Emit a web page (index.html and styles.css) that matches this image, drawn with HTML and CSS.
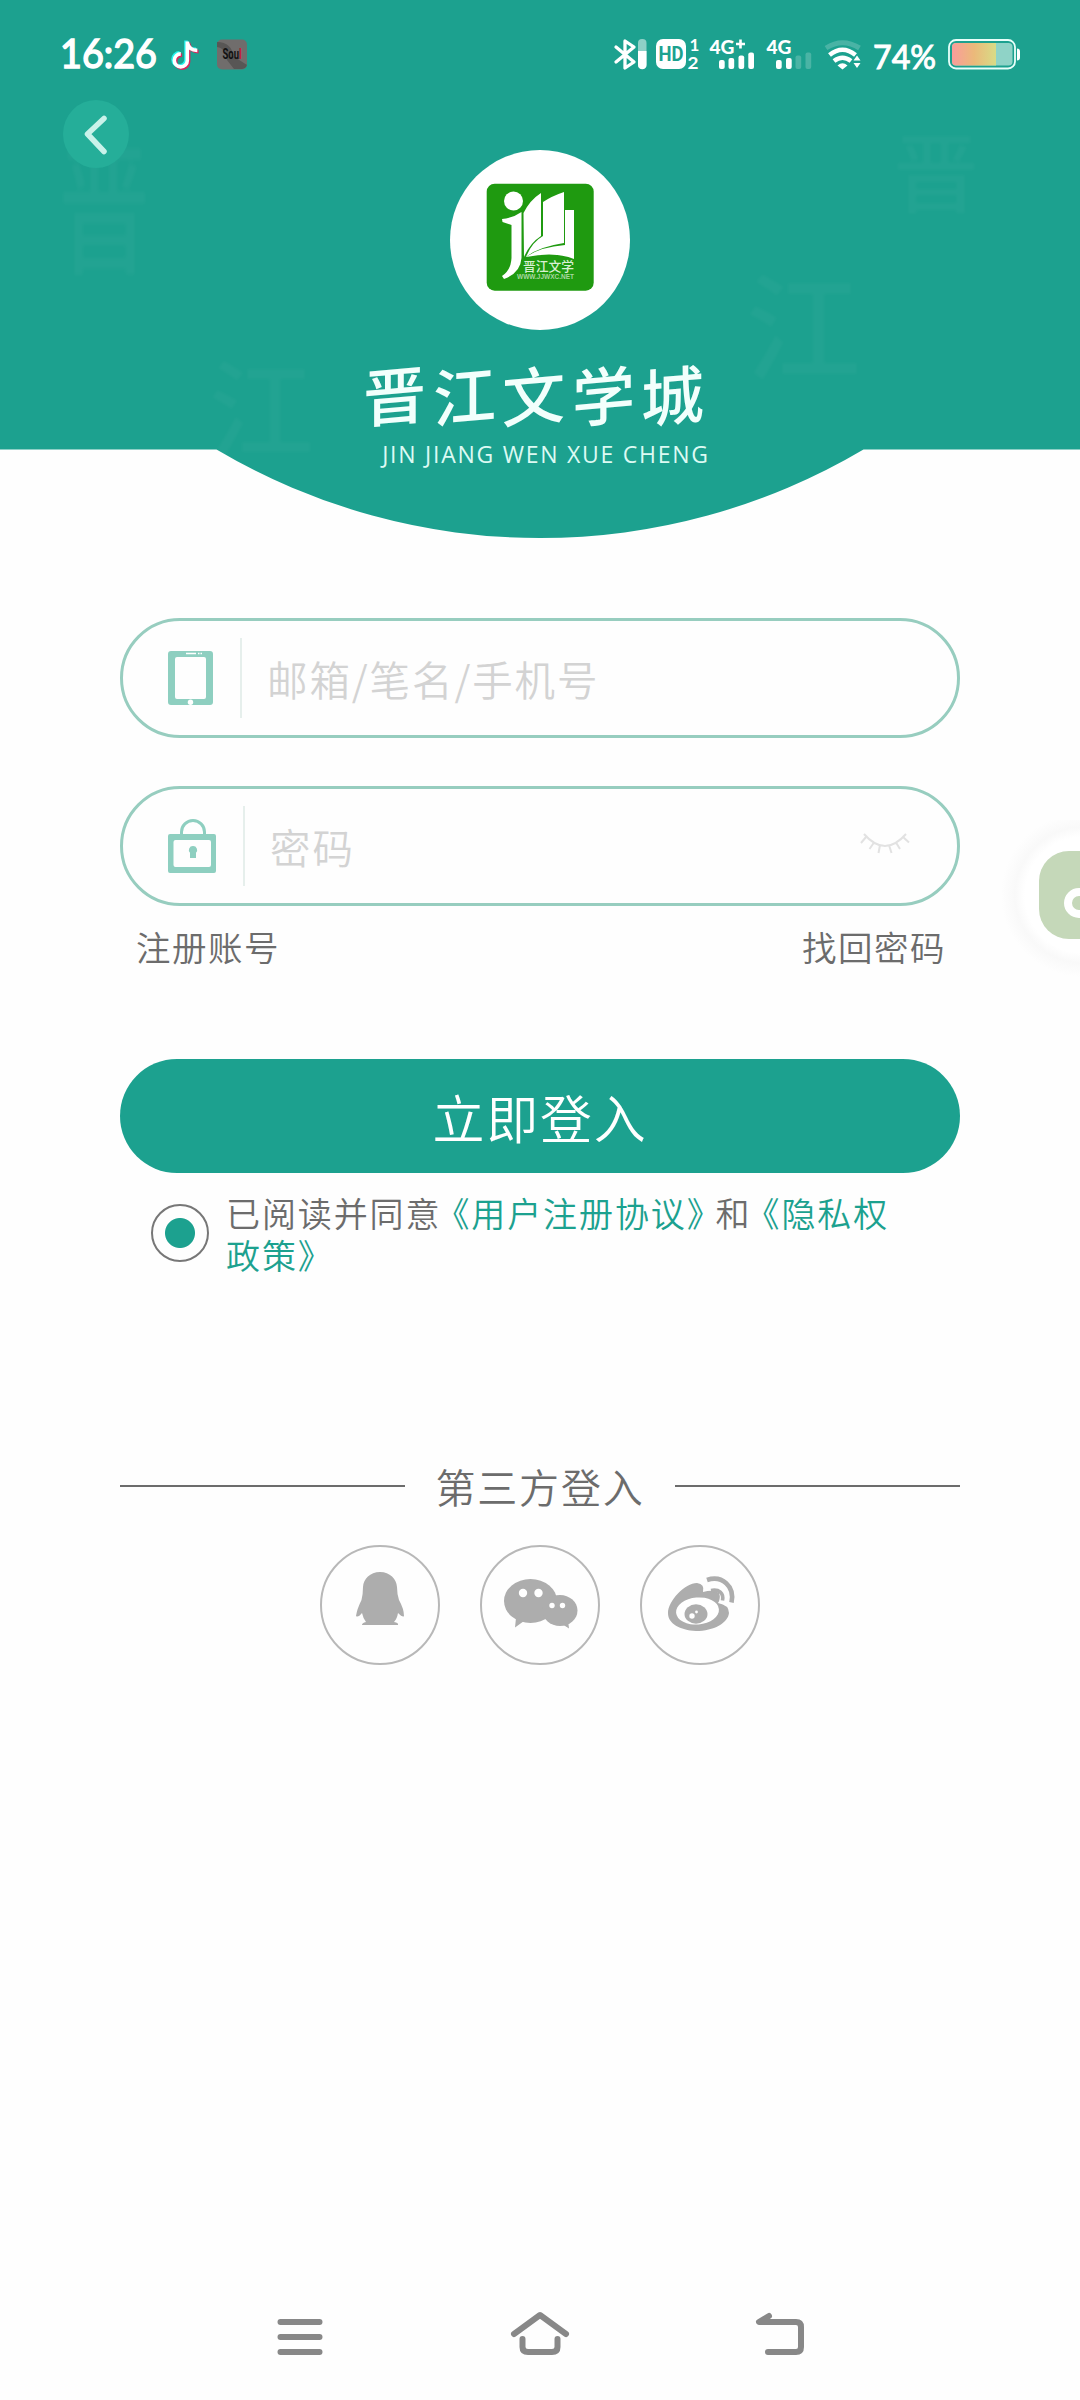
FILE: index.html
```html
<!DOCTYPE html>
<html lang="zh-CN">
<head>
<meta charset="utf-8">
<title>晋江文学城 登入</title>
<link rel="stylesheet" href="styles.css">
</head>
<body>
<div class="screen">
  <header class="hero">
    <svg class="hero-curve" width="1080" height="539" viewBox="0 0 1080 539"><path d="M0 0H1080V449.500H863.500A635 635 0 0 1 216.500 449.500H0Z" fill="#1ca18f"/></svg>
    <span class="ghost ghost-a">晋</span>
    <span class="ghost ghost-b">晋</span>
    <span class="ghost ghost-c">江</span>
    <span class="ghost ghost-d">江</span>

    <div class="status">
      <svg width="200" height="50" viewBox="0 0 200 50">
        <text x="0" y="38" class="clock" textLength="97" lengthAdjust="spacingAndGlyphs">16:26</text>
        <g fill="none" stroke-width="3.600">
          <path d="M127 11V30a6.500 6.500 0 1 1-6.500-6.500M127 12c1 5 4 8 10 8" stroke="#25f4ee" transform="translate(-1 -.6)"/>
          <path d="M127 11V30a6.500 6.500 0 1 1-6.500-6.500M127 12c1 5 4 8 10 8" stroke="#d8265c" transform="translate(1.600 1.600)"/>
          <path d="M127 11V30a6.500 6.500 0 1 1-6.500-6.500M127 12c1 5 4 8 10 8" stroke="#fff" transform="translate(.3 .4)"/>
        </g>
        <rect x="157" y="9.500" width="30" height="30" rx="5" fill="#706d6c"/>
        <path d="M157 12c10 0 16 6 16 14l14 9v-1a5 5 0 0 1-5 5h-8l-7-9c-1-8-4-12-10-13z" fill="#585655"/>
        <text x="162.500" y="29" class="soul" textLength="19" lengthAdjust="spacingAndGlyphs">Sou<tspan fill="#c8102e">l</tspan></text>
      </svg>
      <svg width="422" height="50" viewBox="0 0 422 50">
        <path d="M16 17L34 32L25 38V11L34 17L16 32" fill="none" stroke="#fff" stroke-width="3.300" stroke-linejoin="round" stroke-linecap="round"/>
        <rect x="38" y="9" width="8.500" height="30" rx="4" fill="#fff" opacity=".5"/>
        <path d="M38 21h8.500v14a4 4 0 0 1-8.500 0z" fill="#fff"/>
        <rect x="56" y="9" width="30" height="30" rx="7" fill="#fff"/>
        <text x="58.500" y="31" class="hd" textLength="25" lengthAdjust="spacingAndGlyphs">HD</text>
        <text x="89.500" y="21" class="sim">1</text>
        <text x="87.500" y="39" class="sim" textLength="11" lengthAdjust="spacingAndGlyphs">2</text>
        <text x="109.500" y="23.500" class="net" textLength="25" lengthAdjust="spacingAndGlyphs">4G</text>
        <path d="M136 14H145M140.500 9.500V18.500" stroke="#fff" stroke-width="2.600"/>
        <g fill="#fff">
          <rect x="119" y="30" width="5.700" height="9" rx="2"/><rect x="128.500" y="28" width="5.700" height="11" rx="2"/><rect x="138.500" y="25.500" width="5.700" height="13.500" rx="2"/><rect x="148.300" y="22.500" width="5.700" height="16.500" rx="2"/>
          <rect x="176" y="30" width="5.700" height="9" rx="2"/><rect x="186" y="28" width="5.700" height="11" rx="2"/>
          <g opacity=".2"><rect x="195.500" y="25.500" width="5.700" height="13.500" rx="2"/><rect x="205.500" y="22.500" width="5.700" height="16.500" rx="2"/></g>
        </g>
        <text x="166.500" y="23.500" class="net" textLength="25" lengthAdjust="spacingAndGlyphs">4G</text>
        <g fill="none" stroke="#fff" stroke-width="4.500">
          <path d="M226 18Q242.500 7.500 259.500 18" opacity=".2" stroke-width="5"/>
          <path d="M229.500 25Q242.500 14.500 255.500 25"/>
          <path d="M234 31Q242.500 24.500 251 31"/>
        </g>
        <path d="M237.500 35.500q5-4.500 10 0l-5 4z M253.500 30.500l3.500-5 3.500 5z M253.500 33l3.500 5 3.500-5z" fill="#fff"/>
        <text x="273" y="38.500" class="pct" textLength="63" lengthAdjust="spacingAndGlyphs">74%</text>
        <defs><linearGradient id="charge"><stop offset="0" stop-color="#f99d9b"/><stop offset=".5" stop-color="#ebb97a"/><stop offset="1" stop-color="#d8dc86"/></linearGradient></defs>
        <rect x="349" y="10" width="66" height="28.500" rx="7" fill="none" stroke="#e8fffa" stroke-width="1.800"/>
        <rect x="352" y="13" width="60.500" height="22.500" rx="4" fill="#8fd3c7"/>
        <path d="M356 13h40v22.500h-40a4 4 0 0 1-4-4v-14.500a4 4 0 0 1 4-4z" fill="url(#charge)"/>
        <path d="M417 18.500q3 0 3 3v6q0 3-3 3z" fill="#fff"/>
      </svg>
    </div>

    <div class="back-row">
      <svg width="66" height="68" viewBox="0 0 66 68"><ellipse cx="33" cy="34" rx="33" ry="34" fill="#25ae99"/><path d="M41 18.500L24.500 34L41 51.500" fill="none" stroke="#c9f2ea" stroke-width="5.500" stroke-linecap="round" stroke-linejoin="round"/></svg>
    </div>

    <div class="brand">
      <svg class="brand-logo" width="180" height="180" viewBox="0 0 180 180">
        <circle cx="90" cy="90" r="90" fill="#fff"/>
        <rect x="36.700" y="33.700" width="107" height="107" rx="8" fill="#1f9a10"/>
        <circle cx="63.500" cy="51" r="9.500" fill="#fff"/>
        <path d="M52 69q11-1 19.500-7v46q-1 15-17.500 21l-2-3q9-6 9.500-18V75l-9-3z" fill="#fff"/>
        <path d="M73.500 63Q80 50 91 43V86Q80 93 74 107Z" fill="#fff"/>
        <path d="M93 52Q102 46 114 42V93Q88 97 76 107Q82 92 93 86Z" fill="#fff"/>
        <path d="M115 60h9v49Q105 101 76 107Q90 97 115 95Z" fill="#fff"/>
        <text x="73" y="121" class="logo-cn" textLength="51" lengthAdjust="spacingAndGlyphs">晋江文学</text>
        <text x="67" y="129" class="logo-url" textLength="57" lengthAdjust="spacingAndGlyphs">WWW.JJWXC.NET</text>
      </svg>
      <h1 class="brand-name"><span>晋</span><span>江</span><span>文</span><span>学</span><span>城</span></h1>
      <p class="brand-pinyin">JIN JIANG WEN XUE CHENG</p>
    </div>
  </header>

  <main class="login">
    <div class="field">
      <svg width="45" height="54" viewBox="0 0 45 54"><path fill-rule="evenodd" d="M3 0H42a3 3 0 0 1 3 3V51a3 3 0 0 1-3 3H3a3 3 0 0 1-3-3V3a3 3 0 0 1 3-3ZM9 6a2 2 0 0 0-2 2V46a2 2 0 0 0 2 2H36a2 2 0 0 0 2-2V8a2 2 0 0 0-2-2Z" fill="#8ecfc0"/><path d="M18 2.500H28M30 2.500H31.500M32.500 2.500H34" stroke="#fff" stroke-width="1.600"/><circle cx="22.500" cy="51.300" r="2.700" fill="#fff"/></svg>
      <span class="field-rule"></span>
      <span class="placeholder">邮箱/笔名/手机号</span>
    </div>
    <div class="field">
      <svg width="48" height="54" viewBox="0 0 48 54"><path d="M13.500 17V13a11.500 11.500 0 0 1 23 0V17" fill="none" stroke="#8ecfc0" stroke-width="3"/><path fill-rule="evenodd" d="M2 15H46a2 2 0 0 1 2 2V52a2 2 0 0 1-2 2H2a2 2 0 0 1-2-2V17a2 2 0 0 1 2-2ZM7.500 21a2 2 0 0 0-2 2V46a2 2 0 0 0 2 2H41a2 2 0 0 0 2-2V23a2 2 0 0 0-2-2Z" fill="#8ecfc0"/><path d="M25 27a4 4 0 0 1 3 6.800V39h-6V33.800A4 4 0 0 1 25 27Z" fill="#8ecfc0"/></svg>
      <span class="field-rule"></span>
      <span class="placeholder">密码</span>
      <svg class="eye" width="50" height="22" viewBox="0 0 50 22"><path d="M4 1Q25 25 46 1M6 4L1 10M14 9.500L9.500 16M20 12L18.500 20M29 12L31.500 20M36 9.500L40 16M43 4L49 9.500" fill="none" stroke="#e2e2e2" stroke-width="2"/></svg>
    </div>
    <div class="links"><a>注册账号</a><a>找回密码</a></div>

    <div class="submit">立即登入</div>

    <div class="agree">
      <span class="radio"></span>
      <p>已阅读并同意<a>《用户注册协议》</a>和<a>《隐私权<br>政策》</a></p>
    </div>

    <div class="third-title"><i></i><span>第三方登入</span><i></i></div>
    <div class="third-list">
      <span class="third"><svg width="120" height="120" viewBox="0 0 120 120"><path d="M60 27C70 27 76.500 34 77 42Q77 49 79 55Q84 64 84 71Q83 73 78 68Q77 74 74 77Q79 78 78 80H42Q42 78 46 77Q43 73 42 68Q38 73 36 71Q37 64 41.500 55Q43 49 43 42C43.500 34 50 27 60 27Z" fill="#adadad"/></svg></span>
      <span class="third"><svg width="120" height="120" viewBox="0 0 120 120"><g fill="#adadad"><ellipse cx="50.500" cy="56" rx="26.500" ry="22"/><ellipse cx="80" cy="65.500" rx="17.500" ry="15.500"/><path d="M36 73L35 82.500L44 76ZM82 79L89 83.500L88 75Z"/></g><g fill="#fff"><circle cx="43" cy="48" r="4.200"/><circle cx="58.500" cy="48" r="4.200"/><circle cx="72" cy="60.500" r="2.700"/><circle cx="82.500" cy="60.500" r="2.700"/></g></svg></span>
      <span class="third"><svg width="120" height="120" viewBox="0 0 120 120"><path d="M28 68C28 56 45 38 57 38Q65 39 63 47Q74 44 79 48Q81 53 78 58Q89 60 89 68C88 78 74 86 56 86C40 85 28 79 28 68Z" fill="#adadad"/><ellipse cx="57.500" cy="66" rx="21.500" ry="13.500" fill="#fff" transform="rotate(-5 57.500 66)"/><ellipse cx="56" cy="69" rx="11.500" ry="9.700" fill="#adadad"/><circle cx="52" cy="71" r="2.700" fill="#fff"/><circle cx="56.500" cy="67" r="1.400" fill="#fff"/><path d="M67 35C82 30 95 41 91.500 57.500" fill="none" stroke="#adadad" stroke-width="4.600"/><path d="M71 43.500C80 42 86 47 84 55.500" fill="none" stroke="#fff" stroke-width="5"/><path d="M71 45.500C79 44 84 48 82.500 55.500" fill="none" stroke="#adadad" stroke-width="3.600"/></svg></span>
    </div>
  </main>

  <nav class="sysnav">
    <svg width="60" height="50" viewBox="0 0 60 50"><path d="M10.500 13H49.500M10.500 28H49.500M10.500 43H49.500"/></svg>
    <svg width="60" height="50" viewBox="0 0 60 50"><path d="M4 25L30 6L56 25M12.500 30V38Q12.500 43 18 43H42Q47.500 43 47.500 38V30" /></svg>
    <svg width="60" height="50" viewBox="0 0 60 50"><path d="M19 7L9 13H46Q51 13 51 18V38Q51 43 46 43H18"/></svg>
  </nav>

  <div class="floater"><svg width="80" height="160" viewBox="0 0 80 160"><rect x="39" y="31" width="88" height="88" rx="30" fill="#c5d8b9"/><circle cx="79" cy="83" r="11" fill="none" stroke="#fff" stroke-width="8"/></svg></div>
</div>
</body>
</html>
```
FILE: styles.css
```css
* { box-sizing: border-box; }

body {
  margin: 0;
  background: #fefefe;
  font-family: "Noto Sans CJK SC", sans-serif;
  font-weight: 350;
  color: #6c6c6c;
}

h1, p { margin: 0; font-weight: inherit; }

.screen {
  position: relative;
  display: flex;
  flex-direction: column;
  width: 1080px;
  height: 2400px;
  overflow: hidden;
}

/* header */
.hero { position: relative; height: 538px; }
.hero-curve { position: absolute; left: 0; top: 0; }

.ghost {
  position: absolute;
  color: rgba(255, 255, 255, .028);
  font-weight: 500;
  line-height: 1;
  filter: blur(1.500px);
}
.ghost-a { left: 58px; top: 130px; font-size: 92px; transform: scaleY(1.55); transform-origin: top; }
.ghost-b { left: 893px; top: 126px; font-size: 86px; }
.ghost-c { left: 745px; top: 262px; font-size: 116px; }
.ghost-d { left: 208px; top: 350px; font-size: 106px; }

.status {
  position: relative;
  display: flex;
  justify-content: space-between;
  height: 80px;
  padding: 30px 58px 0 60px;
}
.clock { font: 400 40px Lato, sans-serif; fill: #fff; stroke: #fff; stroke-width: 1.500px; }
.soul { font: 700 14px Roboto, sans-serif; fill: #111; }
.hd { font: 700 20px Roboto, sans-serif; fill: #1ca18f; }
.sim { font: 700 17px Lato, sans-serif; fill: #fff; }
.net { font: 900 19px Lato, sans-serif; fill: #fff; }
.pct { font: 400 33px Lato, sans-serif; fill: #fff; stroke: #fff; stroke-width: 1px; }

.back-row { position: relative; height: 70px; padding: 20px 0 0 63px; }

.brand { position: relative; display: flex; flex-direction: column; align-items: center; }
.brand-logo { display: block; }
.logo-cn { font: 500 13px "Noto Sans CJK SC", sans-serif; fill: #d9f0d3; }
.logo-url { font: 700 7px "Liberation Sans", sans-serif; fill: #a9d8a0; }

.brand-name {
  display: flex;
  gap: 6.500px;
  margin: 29px 0 0 -13px;
  font-size: 63px;
  line-height: 68px;
  font-weight: 500;
  color: #f2fffc;
}
.brand-name span { transform: skewY(-5deg); }

.brand-pinyin {
  margin: 9px 0 0 12px;
  font: 400 23px/36px "Open Sans", sans-serif;
  letter-spacing: 1.750px;
  color: #dcfaf3;
  white-space: nowrap;
}

/* form */
.login { display: flex; flex-direction: column; padding: 80px 120px 0; }

.field {
  display: flex;
  align-items: center;
  height: 120px;
  margin-bottom: 48px;
  padding: 0 47px 0 45px;
  border: 3px solid #97cdbf;
  border-radius: 60px;
}
.field-rule { width: 2px; height: 80px; margin: 0 25px 0 27px; background: #e6efec; }
.placeholder { flex: 1; font-size: 40.500px; letter-spacing: 1.900px; color: #d3d3d3; }
.eye { margin-top: -4px; }

.links {
  display: flex;
  justify-content: space-between;
  margin-top: -34px;
  padding: 0 14px 0 16px;
  font-size: 34.500px;
  line-height: 52px;
  letter-spacing: 1.500px;
}

.submit {
  height: 114px;
  margin-top: 87px;
  border-radius: 57px;
  background: #1ca18f;
  color: #fff;
  font-size: 52px;
  line-height: 116px;
  letter-spacing: 1.800px;
  text-align: center;
}

.agree {
  display: flex;
  gap: 17px;
  margin-top: 19px;
  padding-left: 31px;
  font-size: 34px;
  line-height: 42px;
  letter-spacing: 1.900px;
  white-space: nowrap;
}
.agree a { margin: 0 -7px 0 -6px; color: #1ca18f; }
.radio {
  width: 58px;
  height: 58px;
  margin-top: 12px;
  border: 2px solid #777;
  border-radius: 50%;
  background: radial-gradient(circle, #1ca18f 14.500px, transparent 15.500px);
}

.third-title {
  display: flex;
  justify-content: space-between;
  align-items: center;
  margin-top: 180px;
  height: 60px;
  font-size: 40px;
  line-height: 60px;
  letter-spacing: 1.800px;
}
.third-title i { width: 285px; height: 2px; background: #6c6c6c; }

.third-list { display: flex; justify-content: center; gap: 40px; margin-top: 29px; }
.third { width: 120px; height: 120px; border: 2px solid #b8b8b8; border-radius: 50%; }
.third svg { display: block; margin: -2px; }

/* system navigation */
.sysnav {
  display: flex;
  justify-content: center;
  gap: 180px;
  margin-top: auto;
  height: 91px;
}
.sysnav path { fill: none; stroke: #888; stroke-width: 6; stroke-linecap: round; stroke-linejoin: round; }

.floater {
  position: absolute;
  left: 1000px;
  top: 820px;
  width: 80px;
  height: 160px;
  background: radial-gradient(circle at 83px 75px, #fff 58px, #f9f9f9 68px, #fefefe 82px);
}
```
